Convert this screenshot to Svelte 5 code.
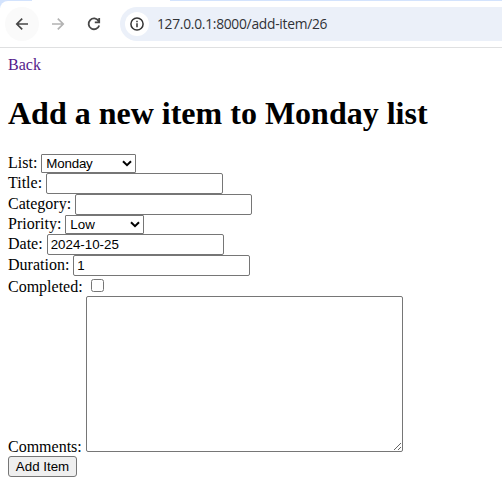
<script lang="ts">
  let list = $state('Monday');
  let title = $state('');
  let category = $state('');
  let priority = $state('Low');
  let date = $state('2024-10-25');
  let duration = $state('1');
  let completed = $state(false);
  let comments = $state('');
</script>

<div class="browser">
  <header class="chrome">
    <div class="toolbar">
      <span class="nav back">
        <svg width="16" height="16" viewBox="0 0 16 16" fill="none" stroke="#474747" stroke-width="1.7">
          <path d="M14 8H3M8.2 2.6L2.8 8L8.2 13.4" />
        </svg>
      </span>
      <span class="nav">
        <svg width="16" height="16" viewBox="0 0 16 16" fill="none" stroke="#b3b3b3" stroke-width="1.7">
          <path d="M2 8H13M7.8 2.6L13.2 8L7.8 13.4" />
        </svg>
      </span>
      <span class="nav">
        <svg width="16" height="16" viewBox="0 0 16 16" fill="none" stroke="#474747" stroke-width="1.8">
          <path d="M12.6 4.9A5.4 5.4 0 1 0 13.2 9.4M13.2 2V6.4H8.8" />
        </svg>
      </span>
      <div class="address">
        <span class="info">
          <svg width="16" height="16" viewBox="0 0 16 16" fill="none" stroke="#333" stroke-width="1.5">
            <circle cx="8" cy="8" r="6.1" />
            <path d="M8 7.3V11.2M8 4.7V6.2" />
          </svg>
        </span>
        <span class="url">127.0.0.1:8000/add-item/26</span>
      </div>
    </div>
  </header>

  <main>
    <a href="#back">Back</a>
    <h1>Add a new item to Monday list</h1>
    <form onsubmit={(e) => e.preventDefault()}>
      <div class="row short">
        <label for="list">List:</label>
        <span class="select monday">
          <select id="list" bind:value={list}><option>Monday</option><option>Tuesday</option></select>
          <svg width="10" height="7" viewBox="0 0 10 7"><path d="M1 1.2L5 5.2L9 1.2" /></svg>
        </span>
      </div>
      <div class="row">
        <label for="title">Title:</label>
        <input id="title" type="text" bind:value={title} />
      </div>
      <div class="row">
        <label for="category">Category:</label>
        <input id="category" type="text" bind:value={category} />
      </div>
      <div class="row short">
        <label for="priority">Priority:</label>
        <span class="select low">
          <select id="priority" bind:value={priority}><option>Low</option><option>High</option></select>
          <svg width="10" height="7" viewBox="0 0 10 7"><path d="M1 1.2L5 5.2L9 1.2" /></svg>
        </span>
      </div>
      <div class="row">
        <label for="date">Date:</label>
        <input id="date" type="text" bind:value={date} />
      </div>
      <div class="row">
        <label for="duration">Duration:</label>
        <input id="duration" type="text" bind:value={duration} />
      </div>
      <div class="row check">
        <label for="completed">Completed:</label>
        <input id="completed" type="checkbox" bind:checked={completed} />
      </div>
      <div class="row comments">
        <label for="comments">Comments:</label>
        <textarea id="comments" bind:value={comments}></textarea>
      </div>
      <button type="submit">Add Item</button>
    </form>
  </main>
</div>

<style>
  :global(body) {
    margin: 0;
    background: #fff;
  }
  .browser {
    width: 502px;
    height: 486px;
    overflow: hidden;
    box-sizing: border-box;
    background: #fff;
    color: #000;
    font: 16px/18px 'Liberation Serif', 'Times New Roman', serif;
  }
  .chrome {
    height: 48px;
    box-sizing: border-box;
    padding-top: 1px;
    border-bottom: 1px solid #dfe0e1;
    background: linear-gradient(90deg, #d3e3fd 32px, #fff 32px, #fff 170px, #d3e3fd 170px) 0 0 / 100% 1px no-repeat,
      linear-gradient(#d3e3fd, #d3e3fd) 0 0 / 8px 8px no-repeat;
  }
  .toolbar {
    display: flex;
    align-items: center;
    height: 46px;
    padding-left: 5px;
    background: #fff;
    border-radius: 8px 0 0 0;
  }
  .nav {
    display: flex;
    align-items: center;
    justify-content: center;
    flex: none;
    width: 34px;
    height: 34px;
    margin-right: 2px;
    border-radius: 50%;
  }
  .nav.back {
    background: #fafafa;
  }
  .address {
    display: flex;
    align-items: center;
    flex: 1;
    height: 34px;
    margin-left: 7px;
    padding-left: 5px;
    box-sizing: border-box;
    border-radius: 17px 0 0 17px;
    background: #ebf0f9;
  }
  .info {
    display: flex;
    align-items: center;
    justify-content: center;
    width: 24px;
    height: 24px;
    border-radius: 50%;
    background: #fff;
  }
  .url {
    margin-left: 8px;
    color: #303236;
    font: 13.8px/20px 'Open Sans', 'Noto Sans', sans-serif;
    letter-spacing: -0.27px;
    white-space: nowrap;
  }
  main {
    padding: 8px 8px 0;
  }
  a {
    display: block;
    color: #551a8b;
    text-decoration: none;
  }
  h1 {
    margin: 21px 0 22px;
    font-size: 32px;
    line-height: 37px;
    white-space: nowrap;
  }
  .row {
    display: flex;
    align-items: baseline;
    gap: 4px;
    height: 21px;
  }
  .row.short {
    height: 19px;
  }
  input[type='text'],
  select,
  textarea,
  button {
    box-sizing: border-box;
    margin: 0;
    border: 1px solid #767676;
    border-radius: 2px;
    background: #fff;
    color: #000;
    font: 13.333px 'Liberation Sans', Arial, sans-serif;
  }
  input[type='text'] {
    width: 177px;
    height: 21px;
    padding: 1px 3px;
  }
  .select {
    position: relative;
    display: inline-block;
    height: 19px;
  }
  .select svg {
    position: absolute;
    right: 4px;
    top: 6px;
    fill: none;
    stroke: #000;
    stroke-width: 2;
    pointer-events: none;
  }
  select {
    display: block;
    width: 100%;
    height: 19px;
    padding: 0 4px;
    appearance: none;
    border-radius: 1px;
  }
  .monday {
    width: 95px;
  }
  .monday select {
    letter-spacing: -0.2px;
  }
  .low {
    width: 79px;
  }
  .row.check {
    height: 20px;
    align-items: flex-start;
    gap: 8px;
  }
  .check label {
    margin-top: 2px;
  }
  .check input {
    width: 13px;
    height: 13px;
    margin: 3px 0 0;
  }
  .row.comments {
    height: 160px;
    align-items: flex-start;
  }
  .comments label {
    margin-top: 142px;
  }
  textarea {
    width: 317px;
    height: 156px;
    resize: both;
  }
  button {
    display: block;
    width: 69px;
    height: 21px;
    padding: 0;
    border-radius: 3px;
    background: #efefef;
  }
</style>
